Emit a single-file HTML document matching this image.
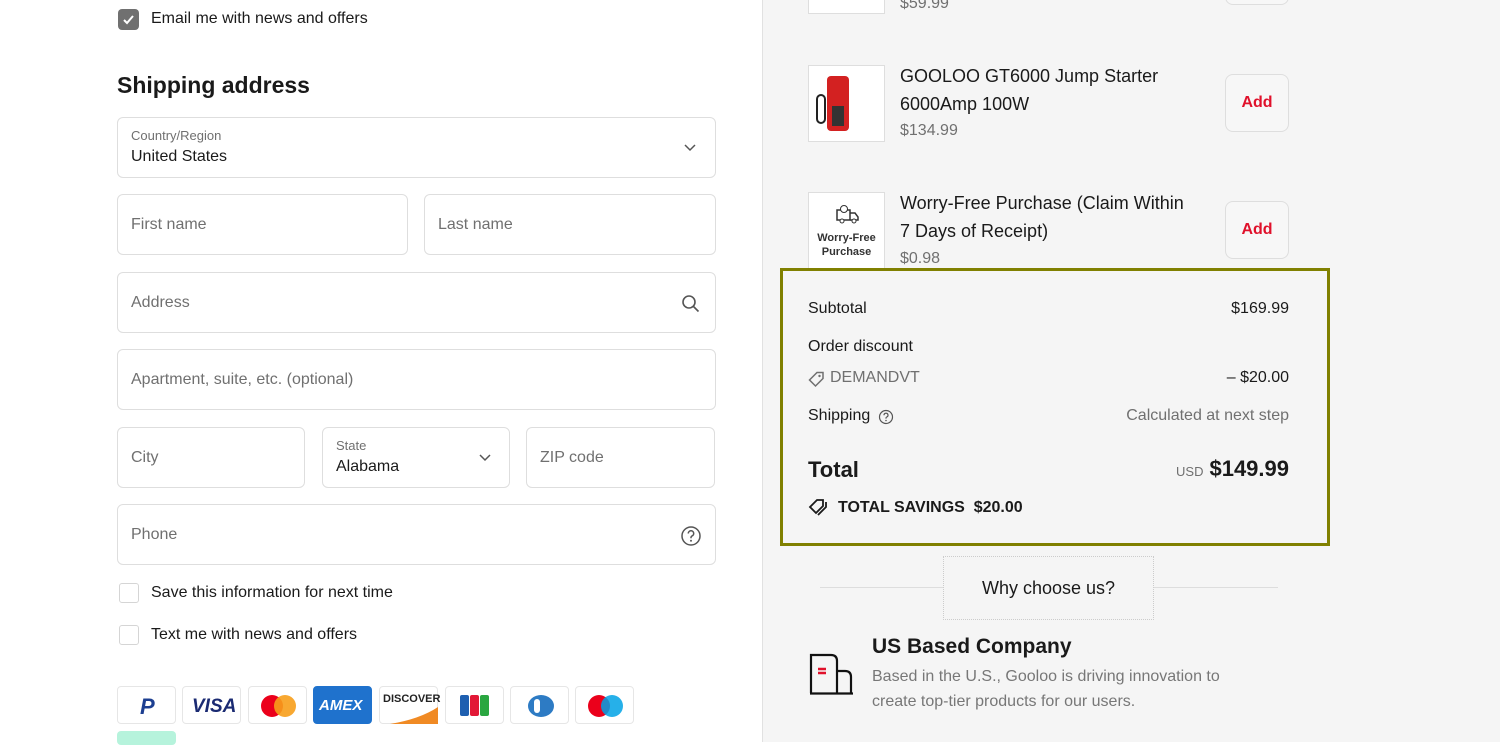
<!DOCTYPE html>
<html><head><style>
*{box-sizing:border-box;margin:0;padding:0}
body{width:1500px;height:742px;overflow:hidden;font-family:"Liberation Sans",Arial,sans-serif;background:#fff;position:relative;color:#1a1a1a}
.a{position:absolute}
.f{position:absolute;border:1px solid #dedede;border-radius:6px;background:#fff;font-size:16px;color:#707070}
.f span{position:absolute;left:13px;top:50%;transform:translateY(-50%)}
.lbl{font-size:13px;color:#707070;position:absolute;left:13px;top:10px}
.val{font-size:16px;color:#1a1a1a;position:absolute;left:13px;top:30px}
.cb{position:absolute;width:20px;height:20px;border:1px solid #d5d5d5;border-radius:3px;background:#fff}
.card{position:absolute;top:686px;width:59px;height:38px;border:1px solid #e6e6e6;border-radius:4px;background:#fff}
.right{position:absolute;left:762px;top:0;width:738px;height:742px;background:#f5f5f5;border-left:1px solid #e1e1e1}
.thumb{position:absolute;left:45px;width:77px;height:77px;background:#fff;border:1px solid #dedede}
.pt{position:absolute;left:137px;font-size:18px;color:#1a1a1a;line-height:28px}
.pp{position:absolute;left:137px;font-size:16px;color:#707070}
.add{position:absolute;left:462px;width:64px;height:58px;border:1px solid #dedede;border-radius:8px;background:#f7f7f7;color:#e0112b;font-weight:bold;font-size:16px;text-align:center;line-height:56px}
.r{position:absolute;font-size:16px}
</style></head><body>
<div class="a" style="left:118px;top:9px;width:21px;height:21px;background:#707070;border-radius:4px"><svg width="21" height="21"><path d="M6 11l3 3 6-7" stroke="#fff" stroke-width="2" fill="none"/></svg></div>
<div class="a" style="left:151px;top:10px;font-size:16px">Email me with news and offers</div>
<div class="a" style="left:117px;top:72px;font-size:23px;font-weight:bold">Shipping address</div>
<div class="f" style="left:117px;top:117px;width:599px;height:61px"><div class="lbl">Country/Region</div><div class="val">United States</div><svg class="a" style="left:566px;top:25px" width="12" height="10"><path d="M1 2l5 5 5-5" stroke="#555" stroke-width="1.5" fill="none"/></svg></div>
<div class="f" style="left:117px;top:194px;width:291px;height:61px"><span>First name</span></div>
<div class="f" style="left:424px;top:194px;width:292px;height:61px"><span>Last name</span></div>
<div class="f" style="left:117px;top:272px;width:599px;height:61px"><span>Address</span><svg class="a" style="left:563px;top:21px" width="20" height="20"><circle cx="8" cy="8" r="6" stroke="#555" stroke-width="1.6" fill="none"/><path d="M12.5 12.5l5 5" stroke="#555" stroke-width="1.6"/></svg></div>
<div class="f" style="left:117px;top:349px;width:599px;height:61px"><span>Apartment, suite, etc. (optional)</span></div>
<div class="f" style="left:117px;top:427px;width:188px;height:61px"><span>City</span></div>
<div class="f" style="left:322px;top:427px;width:188px;height:61px"><div class="lbl">State</div><div class="val">Alabama</div><svg class="a" style="left:156px;top:25px" width="12" height="10"><path d="M1 2l5 5 5-5" stroke="#555" stroke-width="1.5" fill="none"/></svg></div>
<div class="f" style="left:526px;top:427px;width:189px;height:61px"><span>ZIP code</span></div>
<div class="f" style="left:117px;top:504px;width:599px;height:61px"><span>Phone</span><svg class="a" style="left:562px;top:20px" width="22" height="22"><circle cx="11" cy="11" r="9" stroke="#555" stroke-width="1.5" fill="none"/><path d="M8.3 8.5a2.7 2.7 0 1 1 3.6 2.5c-.6.3-.9.7-.9 1.5v.8" stroke="#555" stroke-width="1.5" fill="none"/><circle cx="11" cy="15.8" r="1" fill="#555"/></svg></div>
<div class="cb" style="left:119px;top:583px"></div><div class="a" style="left:151px;top:584px;font-size:16px">Save this information for next time</div>
<div class="cb" style="left:119px;top:625px"></div><div class="a" style="left:151px;top:626px;font-size:16px">Text me with news and offers</div>
<div class="card" style="left:117px"><div class="a" style="left:22px;top:7px;font:italic bold 22px 'Liberation Sans';color:#1d3f91">P</div></div>
<div class="card" style="left:182px"><div class="a" style="left:9px;top:9px;font:italic bold 19px 'Liberation Sans';color:#1a2a72">VISA</div></div>
<div class="card" style="left:248px"><div class="a" style="left:12px;top:8px;width:22px;height:22px;border-radius:50%;background:#eb001b"></div><div class="a" style="left:25px;top:8px;width:22px;height:22px;border-radius:50%;background:#f79e1b;opacity:.9"></div></div>
<div class="card" style="left:313px;background:#1f72cd;border-color:#1f72cd"><div class="a" style="left:5px;top:10px;font:italic bold 15px 'Liberation Sans';color:#fff">AMEX</div></div>
<div class="card" style="left:379px"><div class="a" style="left:3px;top:6px;font:bold 11px 'Liberation Sans';color:#222">DISCOVER</div><svg class="a" style="left:10px;top:18px" width="48" height="20"><path d="M0 19Q30 14 48 2V19Z" fill="#f08a24"/></svg></div>
<div class="card" style="left:445px"><div class="a" style="left:14px;top:8px;width:9px;height:21px;background:#1e5fb0;border-radius:2px"></div><div class="a" style="left:24px;top:8px;width:9px;height:21px;background:#e21836;border-radius:2px"></div><div class="a" style="left:34px;top:8px;width:9px;height:21px;background:#2aa640;border-radius:2px"></div></div>
<div class="card" style="left:510px"><div class="a" style="left:17px;top:8px;width:26px;height:22px;border-radius:50%;background:#2d7bc4"></div><div class="a" style="left:23px;top:12px;width:6px;height:14px;background:#fff;border-radius:3px"></div></div>
<div class="card" style="left:575px"><div class="a" style="left:12px;top:8px;width:22px;height:22px;border-radius:50%;background:#eb001b"></div><div class="a" style="left:25px;top:8px;width:22px;height:22px;border-radius:50%;background:#00a2e5;opacity:.85"></div></div>
<div class="a" style="left:117px;top:731px;width:59px;height:14px;background:#b6f3dc;border-radius:4px"></div>

<div class="right">
 <div class="thumb" style="top:-63px"></div>
 <div class="pp" style="top:-5px">$59.99</div>
 <div class="add" style="top:-53px"></div>
 <div class="thumb" style="top:65px"><div class="a" style="left:18px;top:10px;width:22px;height:55px;background:#d32121;border-radius:4px"></div><div class="a" style="left:23px;top:40px;width:12px;height:20px;background:#333"></div><div class="a" style="left:7px;top:28px;width:10px;height:30px;border:2px solid #222;border-radius:5px"></div></div>
 <div class="pt" style="top:62px">GOOLOO GT6000 Jump Starter<br>6000Amp 100W</div>
 <div class="pp" style="top:122px">$134.99</div>
 <div class="add" style="top:74px">Add</div>
 <div class="thumb" style="top:192px"><svg class="a" style="left:27px;top:12px" width="24" height="20"><rect x="1" y="5" width="13" height="10" fill="none" stroke="#333" stroke-width="1.5"/><path d="M14 8h5l3 4v3h-8" fill="none" stroke="#333" stroke-width="1.5"/><circle cx="6" cy="16" r="2" fill="#fff" stroke="#333"/><circle cx="18" cy="16" r="2" fill="#fff" stroke="#333"/><circle cx="8" cy="4" r="3.5" fill="#fff" stroke="#333"/></svg><div class="a" style="left:0;width:75px;top:38px;text-align:center;font:bold 11px/14px 'Liberation Sans';color:#333">Worry-Free<br>Purchase</div></div>
 <div class="pt" style="top:189px">Worry-Free Purchase (Claim Within<br>7 Days of Receipt)</div>
 <div class="pp" style="top:250px">$0.98</div>
 <div class="add" style="top:201px">Add</div>
 <div class="a" style="left:17px;top:268px;width:550px;height:278px;border:3px solid #808000;background:#f5f5f5"></div>
 <div class="r" style="left:45px;top:300px">Subtotal</div><div class="r" style="right:211px;top:300px">$169.99</div>
 <div class="r" style="left:45px;top:338px">Order discount</div>
 <svg class="a" style="left:45px;top:371px" width="17" height="17"><path d="M9 1.5h6v6l-7.5 7.5-6-6z" fill="none" stroke="#707070" stroke-width="1.5"/><circle cx="11.5" cy="5" r="1.2" fill="#707070"/></svg>
 <div class="r" style="left:67px;top:369px;color:#707070">DEMANDVT</div><div class="r" style="right:211px;top:369px">– $20.00</div>
 <div class="r" style="left:45px;top:407px">Shipping</div>
 <svg class="a" style="left:115px;top:409px" width="16" height="16"><circle cx="8" cy="8" r="6.5" stroke="#555" stroke-width="1.2" fill="none"/><path d="M6 6.2a2 2 0 1 1 2.6 1.9c-.4.2-.6.5-.6 1v.5" stroke="#555" stroke-width="1.2" fill="none"/><circle cx="8" cy="11.5" r=".8" fill="#555"/></svg>
 <div class="r" style="right:211px;top:407px;color:#707070">Calculated at next step</div>
 <div class="r" style="left:45px;top:457px;font-size:22px;font-weight:bold">Total</div>
 <div class="r" style="right:211px;top:456px"><span style="font-size:13px;color:#707070;margin-right:6px">USD</span><span style="font-size:22px;font-weight:bold">$149.99</span></div>
 <svg class="a" style="left:45px;top:498px" width="22" height="20"><path d="M9 2h6v6l-7 7-6-6z" fill="none" stroke="#1a1a1a" stroke-width="1.8"/><path d="M18 4v5l-8 8" fill="none" stroke="#1a1a1a" stroke-width="1.8"/></svg>
 <div class="r" style="left:75px;top:499px;font-weight:bold">TOTAL SAVINGS&nbsp; $20.00</div>
 <div class="a" style="left:57px;top:587px;width:458px;height:1px;background:#ddd"></div>
 <div class="a" style="left:180px;top:556px;width:211px;height:64px;border:1px dotted #ccc;background:#f5f5f5;text-align:center;line-height:62px;font-size:18px">Why choose us?</div>
 <svg class="a" style="left:46px;top:652px" width="46" height="44"><path d="M2 41V3h20q6 0 6 6v32M28 19h8q6 0 6 6v16M1 41.5h43" fill="none" stroke="#111" stroke-width="2.2"/><path d="M9 17h8M9 21h8" stroke="#e0112b" stroke-width="2.4"/></svg>
 <div class="a" style="left:109px;top:635px;font-size:21px;font-weight:bold">US Based Company</div>
 <div class="a" style="left:109px;top:664px;font-size:16px;line-height:25px;color:#777">Based in the U.S., Gooloo is driving innovation to<br>create top-tier products for our users.</div>
</div>
</body></html>
